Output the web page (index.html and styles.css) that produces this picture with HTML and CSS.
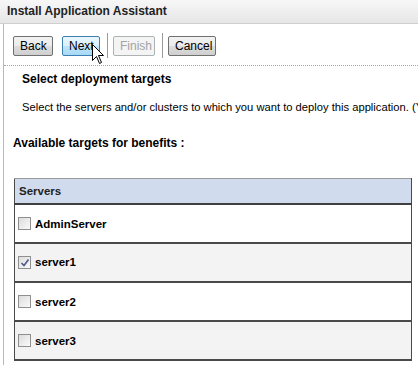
FILE: index.html
```html
<!DOCTYPE html>
<html lang="en">
<head>
    <meta charset="UTF-8">
    <title>Install Application Assistant</title>
    <link rel="stylesheet" href="styles.css">
</head>
<body>

<div class="header">Install Application Assistant</div>

<div class="page">
    <div class="toolbar">
        <button class="btn btn-back">Back</button>
        <button class="btn btn-next">Next</button>
        <span class="sep"></span>
        <button class="btn btn-finish" disabled>Finish</button>
        <span class="sep"></span>
        <button class="btn btn-cancel">Cancel</button>

        <svg class="cursor" width="13" height="21" viewBox="0 0 13 21">
            <path d="M0.5 0.5 L0.5 16.5 L4.5 12.5 L7.5 19.5 L9.5 18.5 L6.5 11.5 L11.5 11.5 Z" fill="#fff" stroke="#000" stroke-width="1"/>
        </svg>
    </div>

    <div class="section">
        <h2 class="section-title">Select deployment targets</h2>
        <p class="section-text">Select the servers and/or clusters to which you want to deploy this application. (You can reconfigure deployment targets later.)</p>
    </div>

    <h3 class="targets-title">Available targets for benefits :</h3>

    <table class="targets">
        <thead>
            <tr><th>Servers</th></tr>
        </thead>
        <tbody>
            <tr><td><span class="check"></span>AdminServer</td></tr>
            <tr class="alt"><td><span class="check checked"><svg width="10" height="10" viewBox="0 0 10 10"><path d="M1.5 5 L4 7.5 L8.5 1.5" fill="none" stroke="#4a5a8c" stroke-width="1.6"/></svg></span>server1</td></tr>
            <tr><td><span class="check"></span>server2</td></tr>
            <tr class="alt"><td><span class="check"></span>server3</td></tr>
        </tbody>
    </table>
</div>

</body>
</html>
```

FILE: styles.css
```css
body {
    margin: 0;
    background: #ffffff;
    color: #000000;
    font-family: 'Liberation Sans', Tahoma, Arial, sans-serif;
    overflow: hidden;
}

.header {
    height: 23px;
    line-height: 22px;
    padding-left: 7px;
    font-size: 12px;
    font-weight: bold;
    color: #222;
    background: linear-gradient(#f7f7f7, #e6e6e6);
    border-bottom: 1px solid #cfcfcf;
}

.page {
    margin-left: 3px;
    border-left: 1px solid #b8b8b8;
    height: 341px;
    overflow: hidden;
}

.toolbar {
    position: relative;
    display: flex;
    align-items: center;
    padding: 9px 0 7px 9px;
    border-bottom: 1px dotted #a8a8a8;
}

.btn {
    height: 20px;
    margin: 0;
    padding: 0 6px;
    font-family: 'Liberation Sans', Arial, sans-serif;
    font-size: 12px;
    color: #000;
    border: 1px solid #707070;
    border-radius: 2px;
    background: linear-gradient(#f2f2f2 0%, #ebebeb 50%, #dddddd 51%, #cfcfcf 100%);
}

.btn-back {
    width: 40px;
}

.btn-next {
    width: 38px;
    margin-left: 9px;
    border-color: #3c7fb1;
    background: linear-gradient(#eaf6fd 0%, #d9f0fc 50%, #bee6fd 51%, #a7d9f5 100%);
}

.btn-finish {
    width: 42px;
    color: #a3a3a3;
    border-color: #adb2b5;
    background: #f4f4f4;
}

.btn-cancel {
    width: 48px;
}

.sep {
    width: 1px;
    height: 25px;
    margin: 0 5px 0 7px;
    background: #9a9a9a;
    box-shadow: 1px 0 0 #ffffff;
}

.cursor {
    position: absolute;
    left: 88px;
    top: 20px;
}

.section {
    padding-left: 18px;
}

.section-title {
    margin: 6px 0 0;
    font-size: 12px;
    line-height: 15px;
    font-weight: bold;
}

.section-text {
    margin: 13px 0 0;
    font-size: 11.2px;
    line-height: 14px;
    white-space: nowrap;
}

.targets-title {
    margin: 22px 0 0 9px;
    font-size: 12px;
    line-height: 15px;
    font-weight: bold;
}

.targets {
    margin: 27px 0 0 10px;
    width: 398px;
    border-collapse: collapse;
    border: 1px solid #4a4a4a;
    border-top-color: #9a9a9a;
}

.targets th {
    height: 24px;
    padding: 0 0 0 4px;
    text-align: left;
    font-size: 11.5px;
    font-weight: bold;
    color: #222;
    background: #d0dbee;
    border-bottom: 2px solid #3f3f3f;
}

.targets td {
    height: 37px;
    padding: 0 0 0 3px;
    font-size: 11.5px;
    font-weight: bold;
    border-bottom: 2px solid #4a4a4a;
}

.targets tr.alt td {
    background: #f3f3f3;
}

.check {
    display: inline-flex;
    align-items: center;
    justify-content: center;
    width: 11px;
    height: 11px;
    margin-right: 4px;
    vertical-align: -2px;
    border: 1px solid #8e8f8f;
    background: linear-gradient(135deg, #dcdcdc, #fafafa);
}
```
